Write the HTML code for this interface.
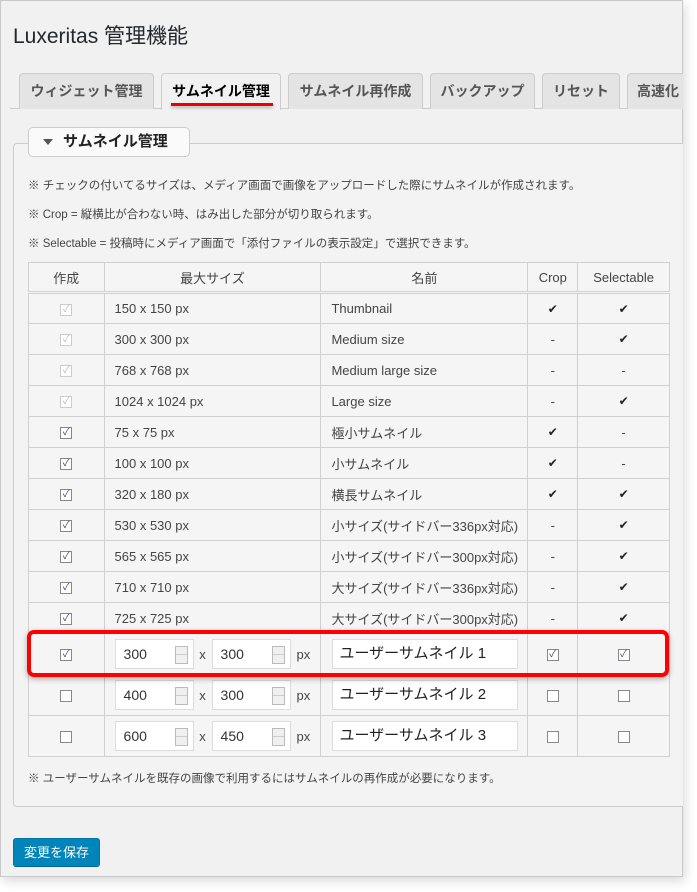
<!DOCTYPE html>
<html><head><meta charset="utf-8"><style>
*{box-sizing:border-box;margin:0;padding:0}
body{width:697px;height:892px;background:#fff;font-family:"Liberation Sans","Noto Sans CJK JP",sans-serif;color:#333;position:relative;overflow:hidden}
.card{position:absolute;left:0;top:0;width:683px;height:877px;background:#f1f1f1;border:1px solid #c8c8c8;box-shadow:2px 4px 10px rgba(0,0,0,.15)}
.a{position:absolute}
h1{position:absolute;left:13px;top:20px;font-size:21px;font-weight:normal;color:#23282d}
.tabs{position:absolute;left:10px;top:108px;width:672px;border-top:1px solid #ccc}
.tab{position:absolute;top:73px;height:36px;background:#e4e4e4;border:1px solid #ccc;border-bottom:none;border-radius:4px 4px 0 0;font-size:14px;font-weight:bold;color:#555;text-align:center;line-height:34px;white-space:nowrap;overflow:hidden}
.tab.on{background:#f1f1f1;color:#000;height:37px}
.panel{position:absolute;left:13px;top:143px;width:670px;height:664px;border:1px solid #ccc;border-right:none;border-radius:4px 0 0 4px;background:#f3f3f3}
.leg{position:absolute;left:28px;top:127px;width:162px;height:30px;background:#fafafa;border:1px solid #ccc;border-radius:5px;font-size:15px;font-weight:bold;color:#222;line-height:28px;padding-left:34px}
.leg:before{content:"";position:absolute;left:14px;top:11px;border-left:5px solid transparent;border-right:5px solid transparent;border-top:6px solid #555}
.note{position:absolute;left:28px;font-size:11.5px;color:#444;white-space:nowrap}
table{position:absolute;left:28px;top:262px;width:642px;border-collapse:collapse;font-size:13px;color:#444;background:#f5f5f5}
td,th{border:1px solid #d0d0d0;height:31px;padding:0}
th{font-weight:normal;font-size:13px;height:30px;border-bottom:3px double #d0d0d0}
td.c{text-align:center}
td.l{padding-left:10px}
.cb{display:inline-block;width:12px;height:12px;border:1px solid #888;background:#fff;vertical-align:middle;position:relative;font-size:10px;line-height:10px;text-align:center;color:#447}
.cb.dis{border-color:#ccc;color:#bbb}
.ck{font-size:12px;color:#222}
tr.in td{height:41px}
.inp{display:inline-block;width:79px;height:30px;border:1px solid #ddd;background:#fff;vertical-align:middle;font-size:14px;line-height:28px;padding-left:8px;position:relative;color:#333}
.inp:after{content:"";position:absolute;right:5px;top:6px;width:11px;height:16px;border:1px solid #bbb;background:linear-gradient(#ccc,#ccc) 0 7px/11px 1px no-repeat #f0f0f0}
.x{display:inline-block;width:18px;text-align:center;vertical-align:middle;font-size:13px}
.px{display:inline-block;margin-left:6px;vertical-align:middle;font-size:13px}
.nm{display:inline-block;width:186px;height:30px;border:1px solid #ddd;background:#fff;font-size:15px;line-height:28px;padding-left:6px;vertical-align:middle;color:#222}
.btn{position:absolute;left:13px;top:838px;width:87px;height:29px;background:#0085ba;border:1px solid #0073aa;border-bottom-color:#006799;border-radius:3px;color:#fff;font-size:13px;line-height:27px;text-align:center}
.hl{position:absolute;left:27px;top:630px;width:642px;height:47px;border:4px solid #f00;border-radius:7px;box-shadow:0 2px 6px rgba(0,0,0,.3)}
</style></head><body>
<div class="card"></div>
<h1>Luxeritas 管理機能</h1>
<div class="tabs"></div>
<div class="tab" style="left:19px;width:135px">ウィジェット管理</div>
<div class="tab on" style="left:161px;width:120px">サムネイル管理</div>
<div class="a" style="left:171px;top:103px;width:102px;height:3px;background:#e00;box-shadow:0 2px 3px rgba(0,0,0,.25)"></div>
<div class="tab" style="left:288px;width:135px">サムネイル再作成</div>
<div class="tab" style="left:430px;width:105px">バックアップ</div>
<div class="tab" style="left:542px;width:78px">リセット</div>
<div class="tab" style="left:627px;width:56px;border-right:none;border-radius:4px 0 0 0;text-align:left;padding-left:9px">高速化</div>
<div class="panel"></div>
<div class="leg">サムネイル管理</div>
<div class="note" style="top:177px">※ チェックの付いてるサイズは、メディア画面で画像をアップロードした際にサムネイルが作成されます。</div>
<div class="note" style="top:206px">※ Crop = 縦横比が合わない時、はみ出した部分が切り取られます。</div>
<div class="note" style="top:235px">※ Selectable = 投稿時にメディア画面で「添付ファイルの表示設定」で選択できます。</div>
<table>
<colgroup><col style="width:76px"><col style="width:217px"><col style="width:207px"><col style="width:50px"><col style="width:92px"></colgroup>
<tr><th>作成</th><th>最大サイズ</th><th>名前</th><th>Crop</th><th>Selectable</th></tr>
<tr><td class="c"><span class="cb dis">✓</span></td><td class="l">150 x 150 px</td><td class="l">Thumbnail</td><td class="c ck">✔</td><td class="c ck">✔</td></tr>
<tr><td class="c"><span class="cb dis">✓</span></td><td class="l">300 x 300 px</td><td class="l">Medium size</td><td class="c">-</td><td class="c ck">✔</td></tr>
<tr><td class="c"><span class="cb dis">✓</span></td><td class="l">768 x 768 px</td><td class="l">Medium large size</td><td class="c">-</td><td class="c">-</td></tr>
<tr><td class="c"><span class="cb dis">✓</span></td><td class="l">1024 x 1024 px</td><td class="l">Large size</td><td class="c">-</td><td class="c ck">✔</td></tr>
<tr><td class="c"><span class="cb">✓</span></td><td class="l">75 x 75 px</td><td class="l">極小サムネイル</td><td class="c ck">✔</td><td class="c">-</td></tr>
<tr><td class="c"><span class="cb">✓</span></td><td class="l">100 x 100 px</td><td class="l">小サムネイル</td><td class="c ck">✔</td><td class="c">-</td></tr>
<tr><td class="c"><span class="cb">✓</span></td><td class="l">320 x 180 px</td><td class="l">横長サムネイル</td><td class="c ck">✔</td><td class="c ck">✔</td></tr>
<tr><td class="c"><span class="cb">✓</span></td><td class="l">530 x 530 px</td><td class="l">小サイズ(サイドバー336px対応)</td><td class="c">-</td><td class="c ck">✔</td></tr>
<tr><td class="c"><span class="cb">✓</span></td><td class="l">565 x 565 px</td><td class="l">小サイズ(サイドバー300px対応)</td><td class="c">-</td><td class="c ck">✔</td></tr>
<tr><td class="c"><span class="cb">✓</span></td><td class="l">710 x 710 px</td><td class="l">大サイズ(サイドバー336px対応)</td><td class="c">-</td><td class="c ck">✔</td></tr>
<tr><td class="c"><span class="cb">✓</span></td><td class="l">725 x 725 px</td><td class="l">大サイズ(サイドバー300px対応)</td><td class="c">-</td><td class="c ck">✔</td></tr>
<tr class="in"><td class="c"><span class="cb">✓</span></td><td style="padding-left:10px;white-space:nowrap"><span class="inp">300</span><span class="x">x</span><span class="inp">300</span><span class="px">px</span></td><td style="padding-left:11px"><span class="nm">ユーザーサムネイル 1</span></td><td class="c"><span class="cb">✓</span></td><td class="c"><span class="cb">✓</span></td></tr>
<tr class="in"><td class="c"><span class="cb"></span></td><td style="padding-left:10px;white-space:nowrap"><span class="inp">400</span><span class="x">x</span><span class="inp">300</span><span class="px">px</span></td><td style="padding-left:11px"><span class="nm">ユーザーサムネイル 2</span></td><td class="c"><span class="cb"></span></td><td class="c"><span class="cb"></span></td></tr>
<tr class="in"><td class="c"><span class="cb"></span></td><td style="padding-left:10px;white-space:nowrap"><span class="inp">600</span><span class="x">x</span><span class="inp">450</span><span class="px">px</span></td><td style="padding-left:11px"><span class="nm">ユーザーサムネイル 3</span></td><td class="c"><span class="cb"></span></td><td class="c"><span class="cb"></span></td></tr>
</table>
<div class="hl"></div>
<div class="note" style="top:770px">※ ユーザーサムネイルを既存の画像で利用するにはサムネイルの再作成が必要になります。</div>
<div class="btn">変更を保存</div>
</body></html>
